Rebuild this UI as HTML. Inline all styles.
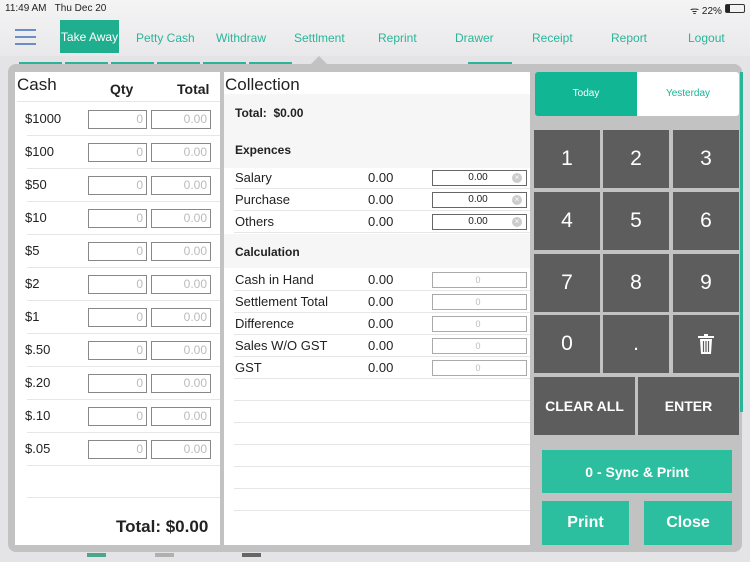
<!DOCTYPE html>
<html><head><style>
*{margin:0;padding:0;box-sizing:border-box}
body{width:750px;height:562px;overflow:hidden;background:#e4e4e6;font-family:"Liberation Sans",Arial,sans-serif;position:relative;color:#222}
.a{position:absolute}
.nav{font-size:12px;color:#2ab59a;top:31px}
.k{position:absolute;background:#5d5d5d;color:#fff;font-size:21px;display:flex;align-items:center;justify-content:center}
.in{position:absolute;border:1px solid #888;background:#fff;font-size:12px;color:#bbb;text-align:right;padding-right:3px;height:19px;line-height:17px}
.lbl{position:absolute;font-size:13px}
.hl{position:absolute;height:1px;background:#e6e6e6}
.tb{position:absolute;background:#2bbf9f;color:#fff;font-weight:bold;display:flex;align-items:center;justify-content:center}
</style></head><body>
<div class="a" style="left:0;top:0;width:750px;height:56px;background:linear-gradient(#f4f4f5,#e9e9eb)"></div>
<div class="a" style="left:5px;top:3px;font-size:10px">11:49 AM&nbsp;&nbsp; Thu Dec 20</div>
<div class="a" style="left:690px;top:3px;font-size:10px">ᯤ 22%</div>
<div class="a" style="left:725px;top:4px;width:20px;height:9px;border:1px solid #333;border-radius:2px"><div style="width:4px;height:100%;background:#222"></div></div>
<div class="a" style="left:15px;top:29px;width:21px;height:2px;background:#6b8fc4;box-shadow:0 7px 0 #6b8fc4,0 14px 0 #6b8fc4"></div>
<div class="a" style="left:60px;top:20px;width:59px;height:33px;background:#1fae8e;color:#fff;font-size:12px;display:flex;align-items:center;justify-content:center;white-space:nowrap">Take Away</div>
<div class="a nav" style="left:136px">Petty Cash</div>
<div class="a nav" style="left:216px">Withdraw</div>
<div class="a nav" style="left:294px">Settlment</div>
<div class="a nav" style="left:378px">Reprint</div>
<div class="a nav" style="left:455px">Drawer</div>
<div class="a nav" style="left:532px">Receipt</div>
<div class="a nav" style="left:611px">Report</div>
<div class="a nav" style="left:688px">Logout</div>
<div class="a" style="left:19px;top:62px;width:274px;height:3px;background:repeating-linear-gradient(90deg,#2ab59a 0 43px,transparent 43px 46px)"></div>
<div class="a" style="left:468px;top:62px;width:44px;height:3px;background:#2ab59a"></div>
<div class="a" style="left:8px;top:64px;width:734px;height:488px;background:#c2c2c2;border-radius:8px"></div>
<div class="a" style="left:311px;top:56px;width:0;height:0;border-left:8px solid transparent;border-right:8px solid transparent;border-bottom:8px solid #c2c2c2"></div>
<!-- cash -->
<div class="a" style="left:15px;top:72px;width:205px;height:473px;background:#fff"></div>
<div class="a" style="left:17px;top:75px;font-size:17px">Cash</div>
<div class="a" style="left:110px;top:81px;font-size:14px;font-weight:bold">Qty</div>
<div class="a" style="left:177px;top:81px;font-size:14px;font-weight:bold">Total</div>
<div class="hl" style="left:17px;top:101px;width:203px"></div>
<div id="cash"></div>
<div class="a" style="left:116px;top:517px;font-size:17px;font-weight:bold">Total: $0.00</div>
<!-- collection -->
<div class="a" style="left:224px;top:72px;width:306px;height:473px;background:#fff"></div>
<div class="a" style="left:224px;top:94px;width:306px;height:74px;background:#f6f6f6"></div>
<div class="a" style="left:224px;top:234px;width:306px;height:34px;background:#f6f6f6"></div>
<div class="a" style="left:225px;top:75px;font-size:17px">Collection</div>
<div class="a" style="left:235px;top:106px;font-size:12px;font-weight:bold">Total:&nbsp; $0.00</div>
<div class="a" style="left:235px;top:143px;font-size:12px;font-weight:bold">Expences</div>
<div class="a" style="left:235px;top:245px;font-size:12px;font-weight:bold">Calculation</div>
<div id="col"></div>
<!-- right -->
<div class="a" style="left:535px;top:72px;width:204px;height:44px;border-radius:3px;overflow:hidden;font-size:10px">
<div class="a" style="left:0;top:0;width:102px;height:44px;background:#11b694;color:#fff;text-align:center;line-height:44px">Today</div>
<div class="a" style="left:102px;top:0;width:102px;height:44px;background:#fff;color:#11b694;text-align:center;line-height:44px">Yesterday</div></div>
<div class="a" style="left:740px;top:72px;width:3px;height:340px;background:#2ab59a"></div>
<div id="keys"></div>
<div class="tb" style="left:542px;top:450px;width:190px;height:43px;font-size:14px">0 - Sync &amp; Print</div>
<div class="tb" style="left:542px;top:501px;width:87px;height:44px;font-size:16px">Print</div>
<div class="tb" style="left:644px;top:501px;width:88px;height:44px;font-size:16px">Close</div>
<div class="a" style="left:87px;top:553px;width:19px;height:4px;background:#4aa88a"></div>
<div class="a" style="left:155px;top:553px;width:19px;height:4px;background:#b0b0b0"></div>
<div class="a" style="left:242px;top:553px;width:19px;height:4px;background:#666"></div>
<script>
var d=["$1000","$100","$50","$10","$5","$2","$1","$.50","$.20","$.10","$.05"],h="";
d.forEach(function(v,i){var y=119+i*33;
h+='<div class="lbl" style="left:25px;top:'+(y-8)+'px">'+v+'</div><div class="in" style="left:88px;top:'+(y-9)+'px;width:59px">0</div><div class="in" style="left:151px;top:'+(y-9)+'px;width:60px">0.00</div><div class="hl" style="left:27px;top:'+(y+16)+'px;width:193px"></div>';});
h+='<div class="hl" style="left:27px;top:497px;width:193px"></div>';
document.getElementById('cash').innerHTML=h;
var c=[["Salary",178,1],["Purchase",200,1],["Others",222,1],["Cash in Hand",280,0],["Settlement Total",302,0],["Difference",324,0],["Sales W/O GST",346,0],["GST",368,0]];h="";
c.forEach(function(r){var y=r[1];
h+='<div class="lbl" style="left:235px;top:'+(y-8)+'px">'+r[0]+'</div><div class="lbl" style="left:368px;top:'+(y-8)+'px">0.00</div>';
if(r[2])h+='<div class="in" style="left:432px;top:'+(y-8)+'px;width:95px;height:16px;line-height:14px;text-align:center;color:#222;font-size:10px;border-color:#666">0.00<span style="position:absolute;right:4px;top:2px;width:10px;height:10px;border-radius:5px;background:#ccc;color:#fff;font-size:8px;line-height:10px">×</span></div>';
else h+='<div class="in" style="left:432px;top:'+(y-8)+'px;width:95px;height:16px;line-height:14px;text-align:center;font-size:9px;border-color:#aaa">0</div>';
h+='<div class="hl" style="left:234px;top:'+(y+10)+'px;width:296px"></div>';});
[400,422,444,466,488,510].forEach(function(y){h+='<div class="hl" style="left:234px;top:'+y+'px;width:296px"></div>';});
document.getElementById('col').innerHTML=h;
var K=[["1","2","3"],["4","5","6"],["7","8","9"],["0",".","🗑"]],X=[534,603,673],Y=[130,192,254,315];h="";
K.forEach(function(r,i){r.forEach(function(v,j){h+='<div class="k" style="left:'+X[j]+'px;top:'+Y[i]+'px;width:66px;height:58px">'+(v=="🗑"?'<svg width="16" height="20" viewBox="0 0 16 20"><rect x="0" y="2" width="16" height="2" fill="#fff"/><rect x="6" y="0" width="4" height="2" fill="#fff"/><path d="M2 5h12l-1 15H3z" fill="#fff"/><path d="M5.5 7v11M8 7v11M10.5 7v11" stroke="#5d5d5d" stroke-width="1.2"/></svg>':v)+'</div>';});});
h+='<div class="k" style="left:534px;top:377px;width:101px;height:58px;font-size:14px;font-weight:bold">CLEAR ALL</div><div class="k" style="left:638px;top:377px;width:101px;height:58px;font-size:14px;font-weight:bold">ENTER</div>';
document.getElementById('keys').innerHTML=h;
</script>
</body></html>
